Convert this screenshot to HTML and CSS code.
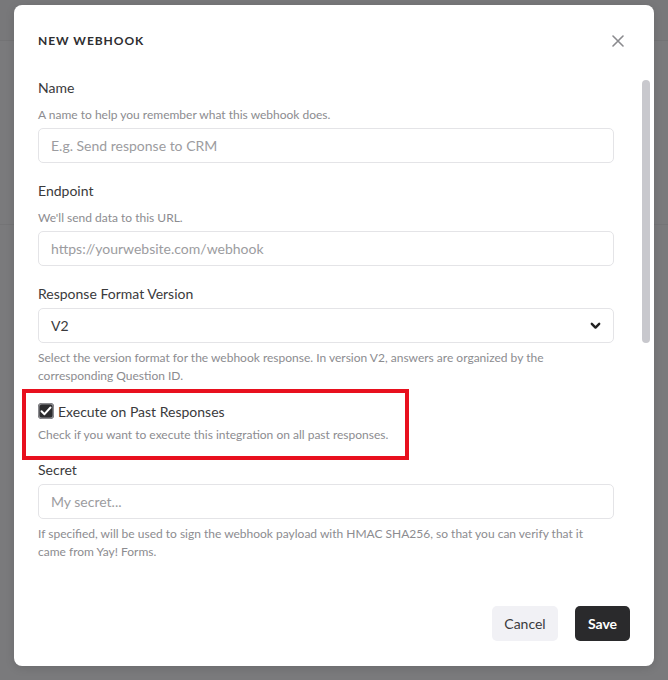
FILE: index.html
```html
<!DOCTYPE html>
<html>
<head>
<meta charset="utf-8">
<link rel="stylesheet" href="styles.css">
</head>
<body>
<div class="backdrop">
  <div class="bg-header"></div>
  <div class="bg-band"></div>
</div>
<div class="stage">
  <div class="modal">
    <div class="modal-header">
      <h2 class="title">NEW WEBHOOK</h2>
      <button class="close" aria-label="Close">
        <svg width="12" height="12" viewBox="0 0 12 12"><path d="M1 1L11 11M11 1L1 11" stroke="#8a8a8e" stroke-width="1.6" stroke-linecap="round"/></svg>
      </button>
    </div>
    <div class="modal-body">
      <div class="field">
        <label class="label">Name</label>
        <p class="help">A name to help you remember what this webhook does.</p>
        <div class="input"><span class="placeholder">E.g. Send response to CRM</span></div>
      </div>
      <div class="field">
        <label class="label">Endpoint</label>
        <p class="help">We'll send data to this URL.</p>
        <div class="input"><span class="placeholder">https://yourwebsite.com/webhook</span></div>
      </div>
      <div class="field">
        <label class="label">Response Format Version</label>
        <div class="input select">
          <span class="value">V2</span>
          <svg class="chev" width="11" height="8" viewBox="0 0 11 8"><path d="M1.8 1.8L5.5 5.6L9.2 1.8" fill="none" stroke="#222" stroke-width="2.4" stroke-linecap="round" stroke-linejoin="round"/></svg>
        </div>
        <p class="help after">Select the version format for the webhook response. In version V2, answers are organized by the corresponding Question ID.</p>
      </div>
      <div class="highlight">
        <div class="check-row">
          <span class="checkbox">
            <svg width="12" height="10" viewBox="0 0 12 10"><path d="M1.5 5.2L4.5 8.2L10.5 1.5" fill="none" stroke="#fff" stroke-width="2" stroke-linecap="round" stroke-linejoin="round"/></svg>
          </span>
          <span class="check-label">Execute on Past Responses</span>
        </div>
        <p class="help check-help">Check if you want to execute this integration on all past responses.</p>
      </div>
      <div class="field secret">
        <label class="label">Secret</label>
        <div class="input"><span class="placeholder">My secret...</span></div>
        <p class="help after">If specified, will be used to sign the webhook payload with HMAC SHA256, so that you can verify that it came from Yay! Forms.</p>
      </div>
    </div>
    <div class="modal-footer">
      <button class="btn btn-cancel">Cancel</button>
      <button class="btn btn-save">Save</button>
    </div>
    <div class="scrollbar"></div>
  </div>
</div>
</body>
</html>
```

FILE: styles.css
```css
* { box-sizing: border-box; }
html, body { margin: 0; padding: 0; }
body {
  width: 668px;
  height: 680px;
  background: #7a7a7c;
  font-family: Lato, "Noto Sans", sans-serif;
  position: relative;
  overflow: hidden;
}
.backdrop { position: absolute; inset: 0; }
.bg-header {
  height: 41px;
  border-bottom: 1px solid #737375;
  background: #78787a;
}
.bg-band {
  margin-top: 183px;
  border-top: 1px solid #747476;
}
.stage {
  position: relative;
  padding: 5px 14px 0 14px;
}
.modal {
  position: relative;
  width: 640px;
  height: 661px;
  background: #fff;
  border-radius: 8px;
  display: flex;
  flex-direction: column;
  box-shadow: 0 2px 10px rgba(0,0,0,0.12);
}
.modal-header {
  display: flex;
  align-items: center;
  justify-content: space-between;
  padding: 29px 30px 0 24px;
  height: 43px;
}
.title {
  margin: 0;
  font-size: 12px;
  line-height: 14px;
  font-weight: 700;
  letter-spacing: 0.95px;
  color: #2e2e30;
}
.close {
  border: 0;
  background: none;
  padding: 0;
  width: 12px;
  height: 12px;
  display: block;
}
.close svg { display: block; }
.modal-body {
  padding: 30px 40px 0 24px;
  display: flex;
  flex-direction: column;
}
.field { margin-bottom: 18px; }
.label {
  display: block;
  font-size: 14px;
  line-height: 20px;
  color: #3a3a3c;
}
.help {
  margin: 0;
  font-size: 12px;
  line-height: 18px;
  color: #8c8c90;
  padding-top: 8px;
  padding-bottom: 4px;
}
.help.after { padding-top: 6px; padding-bottom: 0; }
.input {
  height: 35px;
  border: 1px solid #e4e4e7;
  border-radius: 5px;
  display: flex;
  align-items: center;
  padding: 0 12px;
  font-size: 14px;
}
.label + .input { margin-top: 4px; }
.placeholder { color: #9c9ca0; }
.select { justify-content: space-between; padding-right: 12px; }
.value { color: #3a3a3c; }
.chev { display: block; }
.field:nth-child(3) { margin-bottom: 4px; }
.highlight {
  margin-left: -16px;
  width: 387px;
  border: 4px solid #e8101e;
  padding: 8px 0 12px 12px;
}
.check-row {
  display: flex;
  align-items: center;
  height: 20px;
}
.checkbox {
  width: 16px;
  height: 16px;
  border-radius: 4px;
  background: #2b2b2d;
  box-shadow: 0 0 0 1.5px #8a8a8e inset;
  display: flex;
  align-items: center;
  justify-content: center;
  margin-right: 4px;
}
.checkbox svg { display: block; }
.check-label {
  font-size: 14px;
  color: #3a3a3c;
}
.help.check-help { padding-top: 5px; padding-bottom: 0; }
.secret { margin-bottom: 0; }
.modal-footer {
  margin-top: auto;
  display: flex;
  justify-content: flex-end;
  gap: 17px;
  padding: 0 24px 25px 0;
}
.btn {
  height: 35px;
  border: 0;
  border-radius: 5px;
  font-family: inherit;
  font-size: 14px;
}
.btn-cancel {
  width: 66px;
  background: #f1f1f5;
  color: #3a3a3c;
}
.btn-save {
  width: 55px;
  background: #2a2a2c;
  color: #fff;
  font-weight: 700;
}
.scrollbar {
  position: absolute;
  left: 628px;
  top: 75px;
  width: 8px;
  height: 263px;
  border-radius: 4px;
  background: #c8c8cd;
}
```
